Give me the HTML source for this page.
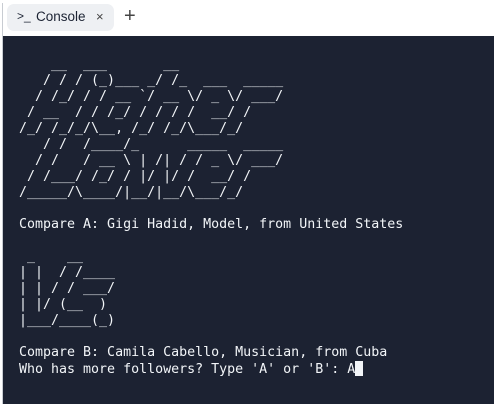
<!DOCTYPE html>
<html><head><style>
html,body{margin:0;padding:0;width:494px;height:404px;overflow:hidden;background:#fff;}
.bar{position:absolute;left:0;top:0;width:494px;height:36px;background:#fff;}
.lb{position:absolute;left:2px;top:3px;width:1px;height:401px;background:#c8ccd2;}
.tab{position:absolute;left:7px;top:4px;width:107px;height:27px;background:#eef0f3;border-radius:7px;font-family:"Liberation Sans",sans-serif;font-size:13.5px;color:#1c2333;}
.tab .ic{position:absolute;left:10px;top:5px;font-size:12px;}
.tab .t{position:absolute;left:29px;top:5px;}
.tab .x{position:absolute;left:89px;top:5px;font-size:13px;color:#444;}
.plus{position:absolute;left:124px;top:6px;font-family:"Liberation Sans",sans-serif;font-size:20px;color:#444;line-height:20px;}
.term{position:absolute;left:3px;top:36px;width:491px;height:368px;background:#1c2232;}
pre{margin:0;position:absolute;left:16px;top:5px;font-family:"DejaVu Sans Mono",monospace;font-size:13.3px;line-height:16px;color:#f2f5f8;}
.cur{background:#f2f5f8;display:inline-block;width:8px;height:15px;vertical-align:-3px;}
</style></head><body>
<div class="bar"></div>
<div class="lb"></div>
<div class="tab"><span class="ic">&gt;_</span><span class="t">Console</span><span class="x">×</span></div>
<div class="plus">+</div>
<div class="term"><pre>

    __  ___       __
   / / / (_)___ _/ /_  ___  _____
  / /_/ / / __ `/ __ \/ _ \/ ___/
 / __  / / /_/ / / / /  __/ /
/_/ /_/_/\__, /_/ /_/\___/_/
   / /  /____/_      _____  _____
  / /   / __ \ | /| / / _ \/ ___/
 / /___/ /_/ / |/ |/ /  __/ /
/_____/\____/|__/|__/\___/_/

Compare A: Gigi Hadid, Model, from United States

 _    __
| |  / /____
| | / / ___/
| |/ (__  )
|___/____(_)

Compare B: Camila Cabello, Musician, from Cuba
Who has more followers? Type 'A' or 'B': A<span class="cur"></span></pre></div>
</body></html>
